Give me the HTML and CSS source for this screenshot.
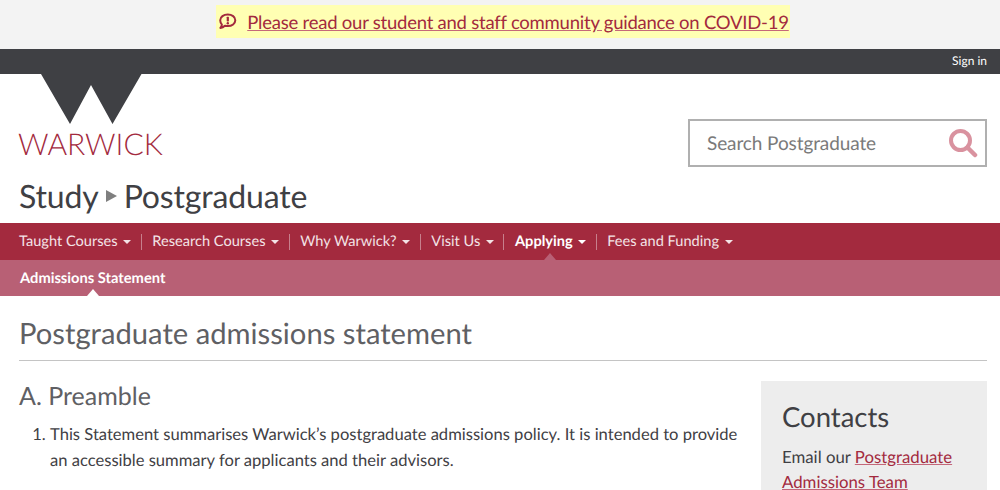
FILE: index.html
```html
<!DOCTYPE html>
<html lang="en">

<head>
    <meta charset="UTF-8">
    <meta name="viewport" content="width=device-width, initial-scale=1.0">
    <title>Postgraduate admissions statement</title>
    <link rel="stylesheet" href="styles.css">
</head>

<body>
    <div class="aviso">
        <div class="aviso-caixa">
            <svg class="aviso-icone" width="19" height="17" viewBox="0 0 19 17">
                <path d="M9.8 1.5c4.200 0 7.500 2.500 7.500 5.800s-3.300 5.800-7.500 5.800c-1 0-2-.1-2.900-.4-1 .9-2.500 1.900-4.500 2.200.7-.9 1.300-2 1.500-3.300C2.800 10.400 2.200 9 2.200 7.300c0-3.300 3.400-5.800 7.600-5.800z" fill="none" stroke="#a32a3e" stroke-width="2" stroke-linejoin="round"/>
                <rect x="8.700" y="3.700" width="2.200" height="4.700" rx=".6" fill="#a32a3e"/>
                <circle cx="9.800" cy="10.300" r="1.200" fill="#a32a3e"/>
            </svg>
            <a href="#">Please read our student and staff community guidance on COVID-19</a>
        </div>
    </div>

    <div class="barra-topo">
        <a href="#">Sign in</a>
    </div>

    <header class="cabecalho">
        <div class="cabecalho-linha">
            <div class="logo">
                <svg class="logo-marca" width="143" height="50" viewBox="0 0 143 50">
                    <polygon points="22,0 51,50 72,11 93.500,50 122.500,0" fill="#3f4044"/>
                </svg>
                <div class="logo-texto">WARWICK</div>
            </div>
            <div class="busca">
                <span class="busca-texto">Search Postgraduate</span>
                <svg width="30" height="30" viewBox="0 0 30 30">
                    <circle cx="12.500" cy="12.500" r="9.500" fill="none" stroke="#d9929f" stroke-width="4"/>
                    <line x1="19.500" y1="19.500" x2="27" y2="27" stroke="#d9929f" stroke-width="4.500" stroke-linecap="round"/>
                </svg>
            </div>
        </div>
        <div class="titulo-site">
            <span>Study</span>
            <span class="seta"></span>
            <span>Postgraduate</span>
        </div>
    </header>

    <nav class="menu">
        <a href="#">Taught Courses <i class="caret"></i></a>
        <a href="#">Research Courses <i class="caret"></i></a>
        <a href="#">Why Warwick? <i class="caret"></i></a>
        <a href="#">Visit Us <i class="caret"></i></a>
        <a href="#" class="ativo">Applying <i class="caret"></i></a>
        <a href="#">Fees and Funding <i class="caret"></i></a>
    </nav>

    <nav class="submenu">
        <a href="#">Admissions Statement</a>
    </nav>

    <main class="conteudo">
        <h1>Postgraduate admissions statement</h1>
        <div class="colunas">
            <div class="texto">
                <h2>A. Preamble</h2>
                <ol>
                    <li>This Statement summarises Warwick’s postgraduate admissions policy. It is intended to provide an accessible summary for applicants and their advisors.</li>
                </ol>
            </div>
            <aside class="contatos">
                <h3>Contacts</h3>
                <p>Email our <a href="#">Postgraduate Admissions Team</a></p>
            </aside>
        </div>
    </main>
</body>

</html>
```

FILE: styles.css
```css
html,
body {
    height: 490px;
    overflow: hidden;
}

body {
    margin: 0;
    background-color: white;
    color: #3f4044;
    font-family: Lato, "Open Sans", sans-serif;
    text-rendering: geometricPrecision;
}

a {
    color: #a32a3e;
    text-decoration-color: #c4687a;
}

.aviso {
    height: 49px;
    padding: 5px 0 0 6px;
    box-sizing: border-box;
    background-color: #f3f3f3;
    display: flex;
    justify-content: center;
}

.aviso-caixa {
    height: 33px;
    padding: 0 1px 0 2px;
    box-sizing: border-box;
    display: flex;
    align-items: center;
    gap: 10px;
    background-color: #ffffb3;
    font-size: 18.500px;
    letter-spacing: -0.23px;
}

.barra-topo {
    height: 25px;
    padding: 0 13px 2px 0;
    box-sizing: border-box;
    background-color: #3f4044;
    display: flex;
    justify-content: flex-end;
    align-items: center;
    font-size: 12px;
}

.barra-topo a {
    color: white;
    text-decoration: none;
}

.cabecalho {
    height: 149px;
    padding: 0 13px 0 19px;
    box-sizing: border-box;
}

.cabecalho-linha {
    display: flex;
    justify-content: space-between;
    align-items: flex-start;
}

.logo-marca {
    display: block;
}

.logo-texto {
    margin: 4px 0 0 -1px;
    font-size: 30px;
    font-weight: 300;
    line-height: 32px;
    color: #a32a3e;
}

.busca {
    margin-top: 45px;
    width: 299px;
    height: 48px;
    box-sizing: border-box;
    padding: 0 7px 0 17px;
    border: 2px solid #b0b0b0;
    display: flex;
    justify-content: space-between;
    align-items: center;
}

.busca-texto {
    font-size: 19px;
    letter-spacing: -0.1px;
    color: #7a7a7a;
}

.titulo-site {
    margin-top: 9px;
    display: flex;
    align-items: center;
    gap: 7px;
    font-size: 32px;
    letter-spacing: -0.15px;
    line-height: 40px;
}

.seta {
    width: 0;
    height: 0;
    border-left: 11px solid #7f7f7f;
    border-top: 6px solid transparent;
    border-bottom: 6px solid transparent;
}

.menu {
    height: 37px;
    padding: 1px 0 0 19px;
    box-sizing: border-box;
    background-color: #a32a3e;
    display: flex;
    align-items: center;
    font-size: 14.600px;
}

.menu a {
    position: relative;
    color: #f3e3e6;
    text-decoration: none;
    padding-right: 10.500px;
    margin-right: 10.500px;
    border-right: 1px solid #c77f8c;
    line-height: 16px;
}

.menu a:last-child {
    border-right: none;
}

.menu a.ativo {
    color: white;
    font-weight: 700;
}

.menu a.ativo::after {
    content: "";
    position: absolute;
    left: 29px;
    top: 19px;
    border-left: 6px solid transparent;
    border-right: 6px solid transparent;
    border-bottom: 7px solid #b86075;
}

.caret {
    display: inline-block;
    margin: 0 -1px 0 2px;
    vertical-align: middle;
    border-left: 4px solid transparent;
    border-right: 4px solid transparent;
    border-top: 4px solid currentColor;
}

.submenu {
    height: 36px;
    padding-left: 20px;
    box-sizing: border-box;
    background-color: #b86075;
    display: flex;
    align-items: center;
    font-size: 14.700px;
    font-weight: 700;
}

.submenu a {
    position: relative;
    color: white;
    text-decoration: none;
}

.submenu a::after {
    content: "";
    position: absolute;
    left: 67px;
    top: 20px;
    border-left: 6px solid transparent;
    border-right: 6px solid transparent;
    border-bottom: 7px solid white;
}

.conteudo {
    padding: 0 13px 0 19px;
}

h1 {
    margin: 0;
    height: 65px;
    box-sizing: border-box;
    padding-top: 20px;
    border-bottom: 1px solid #c4c4c4;
    font-size: 29.200px;
    font-weight: 400;
    line-height: 36px;
    color: #5f6064;
}

.colunas {
    display: flex;
    justify-content: space-between;
    align-items: flex-start;
}

.texto {
    width: 722px;
}

h2 {
    margin: 18px 0 0;
    font-size: 25px;
    font-weight: 400;
    line-height: 34px;
    color: #5f6064;
}

ol {
    margin: 8px 0 0;
    padding-left: 31px;
    font-size: 16.570px;
    line-height: 26px;
}

.contatos {
    margin-top: 20px;
    width: 226px;
    height: 200px;
    box-sizing: border-box;
    padding: 19px 21px;
    background-color: #ededed;
}

h3 {
    margin: 0;
    font-size: 27.500px;
    font-weight: 400;
    line-height: 34px;
}

.contatos p {
    margin: 10px 0 0;
    font-size: 16.800px;
    line-height: 25px;
}
```
